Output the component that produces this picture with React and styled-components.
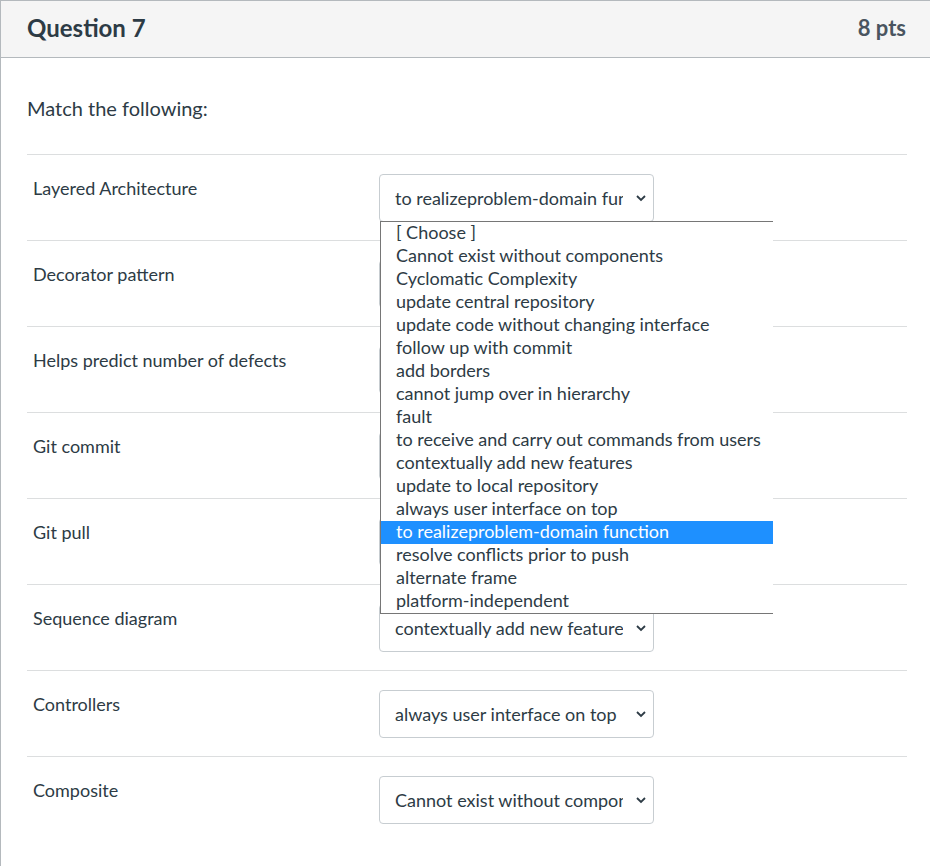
import React from "react";
import styled, { createGlobalStyle } from "styled-components";

const GlobalStyle = createGlobalStyle`
  html, body {
    margin: 0;
    padding: 0;
    background: #ffffff;
    overflow: hidden;
  }
  body {
    font-family: Lato, "Open Sans", "Liberation Sans", sans-serif;
    color: #2d3b45;
  }
`;

const OPTIONS = [
  "[ Choose ]",
  "Cannot exist without components",
  "Cyclomatic Complexity",
  "update central repository",
  "update code without changing interface",
  "follow up with commit",
  "add borders",
  "cannot jump over in hierarchy",
  "fault",
  "to receive and carry out commands from users",
  "contextually add new features",
  "update to local repository",
  "always user interface on top",
  "to realizeproblem-domain function",
  "resolve conflicts prior to push",
  "alternate frame",
  "platform-independent",
];

const ROWS = [
  { label: "Layered Architecture", value: "to realizeproblem-domain function", open: true },
  { label: "Decorator pattern", value: "add borders" },
  { label: "Helps predict number of defects", value: "Cyclomatic Complexity" },
  { label: "Git commit", value: "update to local repository" },
  { label: "Git pull", value: "resolve conflicts prior to push" },
  { label: "Sequence diagram", value: "contextually add new features" },
  { label: "Controllers", value: "always user interface on top" },
  { label: "Composite", value: "Cannot exist without components" },
];

function Chevron() {
  return (
    <ChevronIcon width="12" height="8" viewBox="0 0 12 8">
      <polyline points="2,2 6,6 10,2" fill="none" stroke="#2d3b45" strokeWidth="1.8" />
    </ChevronIcon>
  );
}

function MatchSelect({ value, open }) {
  return (
    <SelectWrap>
      <SelectBox>
        <SelectText>{value}</SelectText>
        <Chevron />
      </SelectBox>
      {open && (
        <OptionList>
          {OPTIONS.map((opt) => (
            <OptionItem key={opt} $active={opt === value}>
              {opt}
            </OptionItem>
          ))}
        </OptionList>
      )}
    </SelectWrap>
  );
}

export default function App() {
  return (
    <>
      <GlobalStyle />
      <QuestionCard>
        <QuestionHeader>
          <QuestionTitle>Question 7</QuestionTitle>
          <Points>8 pts</Points>
        </QuestionHeader>
        <QuestionBody>
          <QuestionText>Match the following:</QuestionText>
          <MatchList>
            {ROWS.map((row) => (
              <MatchRow key={row.label}>
                <MatchLabel>{row.label}</MatchLabel>
                <MatchSelect value={row.value} open={row.open} />
              </MatchRow>
            ))}
          </MatchList>
        </QuestionBody>
      </QuestionCard>
    </>
  );
}

const QuestionCard = styled.div`
  width: 930px;
  height: 866px;
  box-sizing: border-box;
  border-top: 1px solid #b4b9bd;
  border-left: 1px solid #b4b9bd;
  background: #fff;
`;

const QuestionHeader = styled.div`
  height: 57px;
  box-sizing: border-box;
  display: flex;
  align-items: center;
  justify-content: space-between;
  padding: 0 24px 3px 26px;
  background: #f5f5f5;
  border-bottom: 1px solid #b4b9bd;
`;

const QuestionTitle = styled.h2`
  margin: 0;
  font-size: 24px;
  font-weight: 700;
  color: #2d3b45;
`;

const Points = styled.span`
  font-size: 22px;
  font-weight: 700;
  color: #4a5560;
`;

const QuestionBody = styled.div`
  padding: 38px 23px 0 26px;
`;

const QuestionText = styled.p`
  margin: 0 0 34px;
  font-size: 20px;
  line-height: 24px;
  color: #2d3b45;
`;

const MatchList = styled.div`
  display: flex;
  flex-direction: column;
`;

const MatchRow = styled.div`
  display: grid;
  grid-template-columns: 352px 1fr;
  padding: 19px 0 18px;
  border-top: 1px solid #dcdedf;
`;

const MatchLabel = styled.div`
  padding: 3px 0 0 6px;
  font-size: 18px;
  line-height: 22px;
  color: #2d3b45;
`;

const SelectWrap = styled.div`
  position: relative;
  width: 275px;
`;

const SelectBox = styled.div`
  height: 48px;
  box-sizing: border-box;
  display: flex;
  align-items: center;
  padding: 0 6px 0 15px;
  border: 1px solid #c7cdd1;
  border-radius: 4px;
  background: #fff;
`;

const SelectText = styled.span`
  flex: 1;
  overflow: hidden;
  white-space: nowrap;
  font-size: 18px;
  color: #2d3b45;
  margin-right: 12px;
`;

const ChevronIcon = styled.svg`
  flex: none;
`;

const OptionList = styled.div`
  position: absolute;
  top: 47px;
  left: 1px;
  z-index: 5;
  width: 393px;
  box-sizing: border-box;
  background: #fff;
  border: 1px solid #767676;
  border-right: none;
`;

const OptionItem = styled.div`
  height: 23px;
  line-height: 21px;
  padding-left: 15px;
  font-size: 18px;
  white-space: nowrap;
  overflow: hidden;
  color: ${(p) => (p.$active ? "#ffffff" : "#2d3b45")};
  background: ${(p) => (p.$active ? "#1e90ff" : "transparent")};
`;
